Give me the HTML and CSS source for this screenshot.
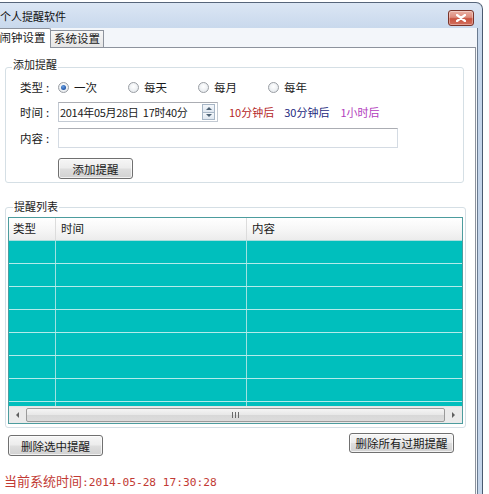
FILE: index.html
```html
<!DOCTYPE html>
<html lang="zh">
<head>
<meta charset="utf-8">
<link rel="stylesheet" href="styles.css">
</head>
<body>
<div class="window">
  <div class="titlebar">
    <span class="title">个人提醒软件</span>
    <span class="close"><svg width="10" height="8" viewBox="0 0 10 8"><path d="M1 1 L9 7 M9 1 L1 7" stroke="#fff" stroke-width="2.2" stroke-linecap="round"/></svg></span>
  </div>
  <div class="client">
    <div class="tabs">
      <div class="tab active">闹钟设置</div>
      <div class="tab">系统设置</div>
    </div>
    <div class="page">
      <div class="group g1">
        <div class="legend">添加提醒</div>
        <div class="row r1">
          <span class="lbl">类型<span class="colon">:</span></span>
          <span class="opt"><span class="radio on"></span>一次</span>
          <span class="opt"><span class="radio"></span>每天</span>
          <span class="opt"><span class="radio"></span>每月</span>
          <span class="opt"><span class="radio"></span>每年</span>
        </div>
        <div class="row r2">
          <span class="lbl">时间<span class="colon">:</span></span>
          <div class="date">
            <span class="datetext">2014年05月28日&nbsp; 17时40分</span>
            <span class="spin"><span class="sbtn"><i class="tri up"></i></span><span class="sbtn"><i class="tri down"></i></span></span>
          </div>
          <span class="quick red">10分钟后</span>
          <span class="quick blue">30分钟后</span>
          <span class="quick pink">1小时后</span>
        </div>
        <div class="row r3">
          <span class="lbl">内容<span class="colon">:</span></span>
          <div class="input"></div>
        </div>
        <div class="row r4">
          <span class="btn add">添加提醒</span>
        </div>
      </div>

      <div class="group g2">
        <div class="legend">提醒列表</div>
        <div class="grid">
          <div class="ghead">
            <div class="c1">类型</div><div class="c2">时间</div><div class="c3">内容</div>
          </div>
          <div class="grow"><div class="c1"></div><div class="c2"></div><div class="c3"></div></div>
          <div class="grow"><div class="c1"></div><div class="c2"></div><div class="c3"></div></div>
          <div class="grow"><div class="c1"></div><div class="c2"></div><div class="c3"></div></div>
          <div class="grow"><div class="c1"></div><div class="c2"></div><div class="c3"></div></div>
          <div class="grow"><div class="c1"></div><div class="c2"></div><div class="c3"></div></div>
          <div class="grow"><div class="c1"></div><div class="c2"></div><div class="c3"></div></div>
          <div class="grow"><div class="c1"></div><div class="c2"></div><div class="c3"></div></div>
          <div class="grow partial"><div class="c1"></div><div class="c2"></div><div class="c3"></div></div>
          <div class="hscroll">
            <span class="arrow"><i class="tri left"></i></span>
            <span class="thumb"><span class="grip"><i></i><i></i><i></i></span></span>
            <span class="arrow"><i class="tri right"></i></span>
          </div>
        </div>
      </div>

      <div class="actions">
        <span class="btn del1">删除选中提醒</span>
        <span class="btn del2">删除所有过期提醒</span>
      </div>
      <div class="status"><span class="cjk">当前系统时间</span><span class="mono">:2014-05-28 17:30:28</span></div>
    </div>
  </div>
</div>
</body>
</html>
```

FILE: styles.css
```css
* { box-sizing: border-box; }
html, body { margin: 0; padding: 0; }
body {
  width: 489px;
  height: 494px;
  overflow: hidden;
  background: #ffffff;
  font-family: "Noto Sans CJK SC", "Noto Sans", sans-serif;
  font-size: 11px;
  color: #1a1a1a;
}

.window {
  margin-top: 2px;
  width: 483px;
  height: 492px;
  overflow: hidden;
  border-top: 1px solid #56657a;
  border-right: 1px solid #4a5a70;
  border-top-right-radius: 7px;
  padding-right: 4px;
  background: linear-gradient(#dbe6f4 0px, #c8d8ec 26px, #c4d5ea 60px, #c4d5ea 100%);
  display: flex;
  flex-direction: column;
}

.titlebar {
  height: 25px;
  display: flex;
  align-items: center;
  justify-content: space-between;
  padding-right: 4px;
}
.title {
  margin-left: 0;
  font-size: 11px;
  color: #111;
  line-height: 14px;
}
.close {
  width: 26px;
  height: 16px;
  margin-top: 4px;
  border: 1px solid #7a3329;
  border-radius: 3px;
  background: linear-gradient(#eab0a3 0%, #dd8b7c 45%, #c9533f 55%, #d2705e 100%);
  box-shadow: inset 0 0 0 1px rgba(255,255,255,0.35);
  display: flex;
  align-items: center;
  justify-content: center;
}

.client {
  flex: 1;
  min-height: 0;
  background: #f3f6fa;
  border-right: 1px solid #6a7b90;
  padding-right: 1px;
  display: flex;
  flex-direction: column;
}

.tabs {
  height: 19px;
  flex: none;
  display: flex;
  align-items: flex-end;
}
.tab {
  font-size: 11.5px;
  line-height: 15px;
  text-align: center;
  border: 1px solid #8d939d;
  border-bottom: none;
}
.tab.active {
  position: relative;
  z-index: 1;
  margin-left: -6px;
  width: 57px;
  height: 20px;
  margin-bottom: -1px;
  background: #ffffff;
  padding-top: 1px;
  border-radius: 2px 2px 0 0;
}
.tab:not(.active) {
  width: 53px;
  height: 17px;
  background: linear-gradient(#f7f7f7, #e6e6e6);
  border-left: none;
}

.page {
  flex: 1;
  min-height: 0;
  background: #ffffff;
  border-top: 1px solid #8d939d;
  border-right: 1px solid #8d939d;
  display: flex;
  flex-direction: column;
}

.group {
  flex: none;
  border: 1px solid #d5dfe5;
  border-radius: 3px;
  display: flex;
  flex-direction: column;
}
.legend {
  align-self: flex-start;
  height: 14px;
  line-height: 14px;
  font-size: 11px;
  background: #fff;
  padding: 0 1px;
  margin-left: 6px;
}
.g1 {
  margin: 19px 11px 0 5px;
  height: 116px;
  padding-left: 14px;
}
.g1 .legend { margin-top: -11px; margin-left: -8px; }

.row { display: flex; align-items: center; }
.lbl { width: 38px; font-size: 11.5px; }
.colon { margin-left: 3px; }
.r1 { height: 20px; margin-top: 6px; }
.r2 { height: 20px; margin-top: 5px; }
.r3 { height: 20px; margin-top: 6px; }
.r4 { margin-top: 10px; padding-left: 38px; }

.opt {
  width: 70px;
  display: flex;
  align-items: center;
  font-size: 11.5px;
}
.radio {
  width: 11px;
  height: 11px;
  border-radius: 50%;
  border: 1px solid #9a9ea4;
  background: radial-gradient(circle at 50% 40%, #ffffff 0%, #eceff2 60%, #dde1e5 100%);
  margin-right: 5px;
  display: flex;
  align-items: center;
  justify-content: center;
}
.radio.on::after {
  content: "";
  width: 5px;
  height: 5px;
  border-radius: 50%;
  background: radial-gradient(circle at 40% 35%, #6aa0e0 0%, #2055a8 70%, #173f80 100%);
}

.date {
  width: 160px;
  height: 20px;
  border: 1px solid #c3cad3;
  border-top-color: #abadb3;
  display: flex;
  align-items: center;
  justify-content: space-between;
  padding: 0 2px 0 1px;
  font-size: 11px;
}
.datetext { letter-spacing: -0.3px; }
.spin {
  width: 13px;
  height: 16px;
  display: flex;
  flex-direction: column;
}
.sbtn {
  flex: 1;
  border: 1px solid #a7b6c6;
  background: linear-gradient(#f4f7fb, #dfe7f0);
  display: flex;
  align-items: center;
  justify-content: center;
}
.sbtn + .sbtn { border-top: none; }
.tri { display: block; width: 0; height: 0; }
.tri.up { border-left: 3px solid transparent; border-right: 3px solid transparent; border-bottom: 3px solid #4d6275; }
.tri.down { border-left: 3px solid transparent; border-right: 3px solid transparent; border-top: 3px solid #4d6275; }
.tri.left { border-top: 3px solid transparent; border-bottom: 3px solid transparent; border-right: 3px solid #606060; }
.tri.right { border-top: 3px solid transparent; border-bottom: 3px solid transparent; border-left: 3px solid #606060; }

.quick { font-size: 11px; }
.quick.red { color: #b52828; margin-left: 11px; }
.quick.blue { color: #1e2a7e; margin-left: 10px; }
.quick.pink { color: #b23cbd; margin-left: 11px; }

.input {
  width: 340px;
  height: 20px;
  border: 1px solid #d4dbe3;
  border-top-color: #abadb3;
}

.btn {
  display: flex;
  align-items: center;
  justify-content: center;
  border: 1px solid #707070;
  border-radius: 3px;
  background: linear-gradient(#f6f6f6 0%, #ececec 48%, #dedede 52%, #d2d2d2 100%);
  box-shadow: inset 0 0 0 1px rgba(255,255,255,0.7);
  font-size: 11.5px;
}
.btn.add { width: 75px; height: 21px; }

.g2 {
  margin: 24px 9px 0 5px;
  padding: 0 2px 3px 2px;
}
.g2 .legend { margin-top: -9px; margin-left: 5px; }

.grid {
  margin-top: 4px;
  height: 207px;
  border: 1px solid #4c9c9e;
  background: #00bfbd;
  display: flex;
  flex-direction: column;
}
.ghead, .grow { display: flex; flex: none; }
.c1 { width: 47px; border-right: 1px solid; }
.c2 { width: 191px; border-right: 1px solid; }
.c3 { flex: 1; }
.ghead {
  height: 23px;
  background: linear-gradient(#ffffff 0%, #f7f7f7 50%, #ececec 100%);
  border-bottom: 1px solid #a8dedd;
  font-size: 11.5px;
  line-height: 21px;
}
.ghead .c1, .ghead .c2 { border-right-color: #dcdcdc; }
.ghead .c1 { padding-left: 4px; }
.ghead .c2 { padding-left: 5px; }
.ghead .c3 { padding-left: 5px; }
.grow {
  height: 23px;
  border-bottom: 1px solid #b3ebea;
}
.grow .c1, .grow .c2 { border-right-color: #9fe2e1; }
.grow.partial { height: 4px; border-bottom: none; }

.hscroll {
  height: 17px;
  flex: none;
  background: #eaeaea;
  display: flex;
  align-items: stretch;
  border-top: 1px solid #e4e4e4;
}
.arrow {
  width: 17px;
  display: flex;
  align-items: center;
  justify-content: center;
}
.thumb {
  flex: 1;
  margin: 1px 0;
  border: 1px solid #9a9a9a;
  border-radius: 2px;
  background: linear-gradient(#f5f5f5 0%, #e7e7e7 50%, #d8d8d8 51%, #dcdcdc 100%);
  display: flex;
  align-items: center;
  justify-content: center;
}
.grip { display: flex; gap: 2px; }
.grip i { display: block; width: 1px; height: 6px; background: #6a6a6a; }

.actions {
  flex: none;
  margin-top: 5px;
  display: flex;
  align-items: flex-start;
  justify-content: space-between;
  padding: 0 21px 0 8px;
}
.btn.del1 { width: 95px; height: 21px; margin-top: 2px; }
.btn.del2 { width: 105px; height: 20px; }

.status {
  flex: none;
  margin-top: 17px;
  padding-left: 4px;
  color: #c23a34;
  line-height: 16px;
  display: flex;
  align-items: baseline;
}
.status .cjk { font-size: 13px; }
.status .mono { font-family: "DejaVu Sans Mono", "Liberation Mono", monospace; font-size: 11.2px; }
```
